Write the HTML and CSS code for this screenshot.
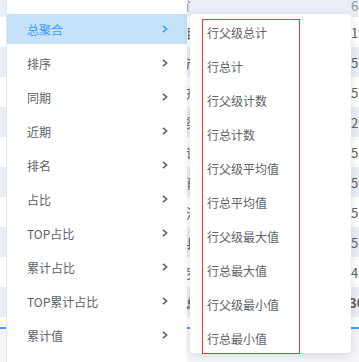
FILE: index.html
```html
<!DOCTYPE html>
<html lang="zh">
<head>
<meta charset="utf-8">
<link rel="stylesheet" href="styles.css">
</head>
<body>
<div class="page">
  <div class="table">
    <div class="row head"><span class="c1">门店</span><span class="c2">6532</span></div>
    <div class="row"><span class="c1">目录</span><span class="c2">1932</span></div>
    <div class="row alt"><span class="c1">产品</span><span class="c2">5721</span></div>
    <div class="row"><span class="c1">剂型</span><span class="c2">5718</span></div>
    <div class="row alt"><span class="c1">渠道</span><span class="c2">2935</span></div>
    <div class="row"><span class="c1">谐美</span><span class="c2">5543</span></div>
    <div class="row alt"><span class="c1">肖售</span><span class="c2">5967</span></div>
    <div class="row"><span class="c1">沦店</span><span class="c2">5112</span></div>
    <div class="row alt"><span class="c1">县区</span><span class="c2">5109</span></div>
    <div class="row"><span class="c1">罗店</span><span class="c2">4521</span></div>
    <div class="row alt total"><span class="c1">总计</span><span class="c2">30,126</span></div>
    <div class="gap"></div>
    <div class="bar"></div>
    <div class="foot"></div>
  </div>

  <div class="cascader">
    <ul class="menu">
      <li class="item active"><span>总聚合</span><svg class="chev" viewBox="0 0 6 8"><polyline points="1,0.8 4.6,4 1,7.2"/></svg></li>
      <li class="item"><span>排序</span><svg class="chev" viewBox="0 0 6 8"><polyline points="1,0.8 4.6,4 1,7.2"/></svg></li>
      <li class="item"><span>同期</span><svg class="chev" viewBox="0 0 6 8"><polyline points="1,0.8 4.6,4 1,7.2"/></svg></li>
      <li class="item"><span>近期</span><svg class="chev" viewBox="0 0 6 8"><polyline points="1,0.8 4.6,4 1,7.2"/></svg></li>
      <li class="item"><span>排名</span><svg class="chev" viewBox="0 0 6 8"><polyline points="1,0.8 4.6,4 1,7.2"/></svg></li>
      <li class="item"><span>占比</span><svg class="chev" viewBox="0 0 6 8"><polyline points="1,0.8 4.6,4 1,7.2"/></svg></li>
      <li class="item"><span>TOP占比</span><svg class="chev" viewBox="0 0 6 8"><polyline points="1,0.8 4.6,4 1,7.2"/></svg></li>
      <li class="item"><span>累计占比</span><svg class="chev" viewBox="0 0 6 8"><polyline points="1,0.8 4.6,4 1,7.2"/></svg></li>
      <li class="item"><span>TOP累计占比</span><svg class="chev" viewBox="0 0 6 8"><polyline points="1,0.8 4.6,4 1,7.2"/></svg></li>
      <li class="item"><span>累计值</span><svg class="chev" viewBox="0 0 6 8"><polyline points="1,0.8 4.6,4 1,7.2"/></svg></li>
    </ul>
  </div>

  <div class="sub">
    <div class="mark"></div>
    <ul class="sublist">
      <li>行父级总计</li>
      <li>行总计</li>
      <li>行父级计数</li>
      <li>行总计数</li>
      <li>行父级平均值</li>
      <li>行总平均值</li>
      <li>行父级最大值</li>
      <li>行总最大值</li>
      <li>行父级最小值</li>
      <li>行总最小值</li>
    </ul>
  </div>
</div>
</body>
</html>
```

FILE: styles.css
```css
* { box-sizing: border-box; }
html, body {
  margin: 0;
  padding: 0;
  background: #ffffff;
  overflow: hidden;
}
body {
  width: 359px;
  height: 362px;
  font-family: "Noto Sans CJK SC", "Noto Sans", sans-serif;
  font-size: 12px;
  color: #606266;
}
.page {
  position: relative;
  width: 359px;
  height: 362px;
  overflow: hidden;
}

/* background table */
.table {
  display: flex;
  flex-direction: column;
  width: 100%;
}
.row {
  display: grid;
  grid-template-columns: 186px 5px 158px 1fr;
  height: 30px;
  align-items: center;
  background: #ffffff;
  white-space: nowrap;
  font-size: 13px;
  color: #606266;
}
.row .c1 { grid-column: 2; overflow: hidden; }
.row .c2 { grid-column: 4; overflow: hidden; padding-left: 2px; }
.row.head {
  height: 17px;
  background: #e9eef6;
  color: #909399;
  align-items: start;
  line-height: 12px;
}
.row.alt { background: #e9eef6; }
.row.total { font-weight: bold; }
.row.total .c2 { padding-left: 0; }
.gap { height: 10px; background: #ffffff; }
.bar { height: 2px; background: #409eff; }
.foot { height: 40px; background: #f3f5f9; }

/* left cascader panel */
.cascader {
  position: absolute;
  left: 6px;
  top: 0;
  bottom: 0;
  width: 181px;
  background: #ffffff;
  border-left: 1px solid #e4e7ed;
}
.menu {
  list-style: none;
  margin: 0;
  padding: 14px 0 0 0;
  display: flex;
  flex-direction: column;
  gap: 4px;
}
.item {
  height: 30px;
  display: flex;
  align-items: center;
  justify-content: space-between;
  padding: 0 19px 0 20px;
  color: #606266;
}
.item.active {
  background: #c6e2f8;
  color: #409eff;
}
.chev {
  width: 6px;
  height: 8px;
  fill: none;
  stroke: #606266;
  stroke-width: 1.6;
}
.item.active .chev { stroke: #409eff; }

/* submenu popup */
.sub {
  position: absolute;
  left: 190px;
  top: 14px;
  width: 161px;
  height: 339px;
  background: #ffffff;
  border-radius: 4px;
  box-shadow: 0 2px 10px rgba(0, 0, 0, 0.12);
}
.mark {
  position: absolute;
  left: 12px;
  top: 5px;
  width: 98px;
  height: 335px;
  border: 1px solid #e53a3a;
}
.sublist {
  list-style: none;
  margin: 0;
  padding: 3px 0 0 17px;
  display: flex;
  flex-direction: column;
  gap: 4px;
}
.sublist li {
  height: 30px;
  display: flex;
  align-items: center;
  color: #606266;
}
```
